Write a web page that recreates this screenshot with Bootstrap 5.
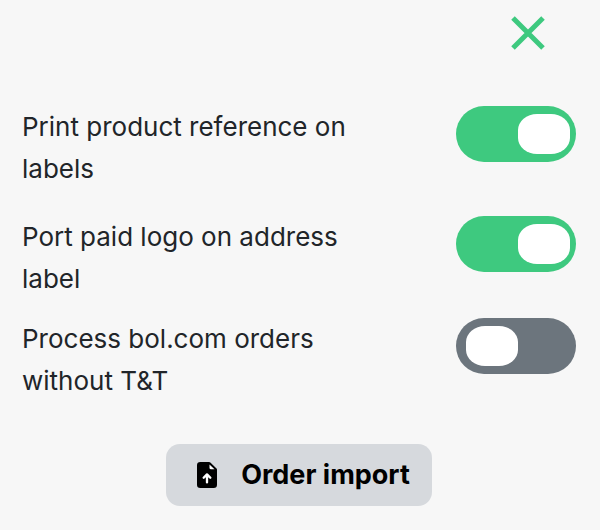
<!doctype html>
<html lang="en">
<head>
<meta charset="utf-8">
<title>Settings</title>
<link href="https://cdn.jsdelivr.net/npm/bootstrap@5.3.0/dist/css/bootstrap.min.css" rel="stylesheet">
<style>
html, body { background: #f7f7f7; }
body { font-family: Inter, sans-serif; color: #212529; width: 600px; height: 530px; overflow: hidden; }
.close-row { height: 66px; padding-top: 14px; padding-right: 49px; }
.close-btn { background: none; border: 0; padding: 0; width: 46px; height: 40px; line-height: 0; color: #3ec97f; }
.setting-list { padding: 40px 24px 0 22px; }
.setting-row { font-size: 26px; line-height: 42px; }
.setting-row + .setting-row { margin-top: 26px; }
.setting-row.tight { margin-top: 18px; }
.setting-text { width: 360px; }
.form-switch.big-switch { padding: 0; margin: 0; min-height: 0; height: 56px; width: 120px; }
.form-switch.big-switch .form-check-input { width: 120px; height: 56px; margin: 0; float: none; display: block; border: 0; border-radius: 28px; background-color: #6c757d; background-size: 52px 40px; background-position: left 10px center; background-image: url("data:image/svg+xml,%3csvg xmlns='http://www.w3.org/2000/svg' viewBox='0 0 52 40'%3e%3crect width='52' height='40' rx='19' ry='16' fill='%23fff'/%3e%3c/svg%3e"); }
.form-switch.big-switch .form-check-input:checked { background-color: #3ec97f; background-position: right 6px center; }
.import-wrap { margin-top: 42px; padding-right: 2px; }
.import-btn { background: #d6d9dd; border: 0; border-radius: 14px; height: 62px; width: 266px; padding: 0 0 0 9px; font-size: 27px; font-weight: 700; color: #000; gap: 24px; }
</style>
</head>
<body>
<div class="d-flex justify-content-end close-row">
  <button type="button" class="close-btn" aria-label="Close">
    <svg width="46" height="40" viewBox="0 0 46 40"><path d="M8 4 L38 34 M38 4 L8 34" stroke="currentColor" stroke-width="5" fill="none"/></svg>
  </button>
</div>
<div class="setting-list">
  <div class="d-flex justify-content-between align-items-start setting-row">
    <div class="setting-text">Print product reference on labels</div>
    <div class="form-check form-switch big-switch"><input class="form-check-input" type="checkbox" role="switch" checked aria-label="Print product reference on labels"></div>
  </div>
  <div class="d-flex justify-content-between align-items-start setting-row">
    <div class="setting-text">Port paid logo on address label</div>
    <div class="form-check form-switch big-switch"><input class="form-check-input" type="checkbox" role="switch" checked aria-label="Port paid logo on address label"></div>
  </div>
  <div class="d-flex justify-content-between align-items-start setting-row tight">
    <div class="setting-text">Process bol.com orders without T&amp;T</div>
    <div class="form-check form-switch big-switch"><input class="form-check-input" type="checkbox" role="switch" aria-label="Process bol.com orders without T&T"></div>
  </div>
</div>
<div class="d-flex justify-content-center import-wrap">
  <button type="button" class="btn import-btn d-inline-flex align-items-center justify-content-center">
    <svg width="20" height="26" viewBox="2 0 12 16" preserveAspectRatio="none"><path fill="#000" d="M9.293 0H4a2 2 0 0 0-2 2v12a2 2 0 0 0 2 2h8a2 2 0 0 0 2-2V4.707A1 1 0 0 0 13.707 4L10 .293A1 1 0 0 0 9.293 0z"/><path fill="#fff" d="M9.5 1.5v2a1 1 0 0 0 1 1h2z"/><path fill="none" stroke="#fff" stroke-width="1.4" stroke-linecap="round" stroke-linejoin="round" d="M8 12.6V8M6 9.7L8 7.6L10 9.7"/></svg>
    <span>Order import</span>
  </button>
</div>
<script src="https://cdn.jsdelivr.net/npm/bootstrap@5.3.0/dist/js/bootstrap.bundle.min.js"></script>
</body>
</html>
